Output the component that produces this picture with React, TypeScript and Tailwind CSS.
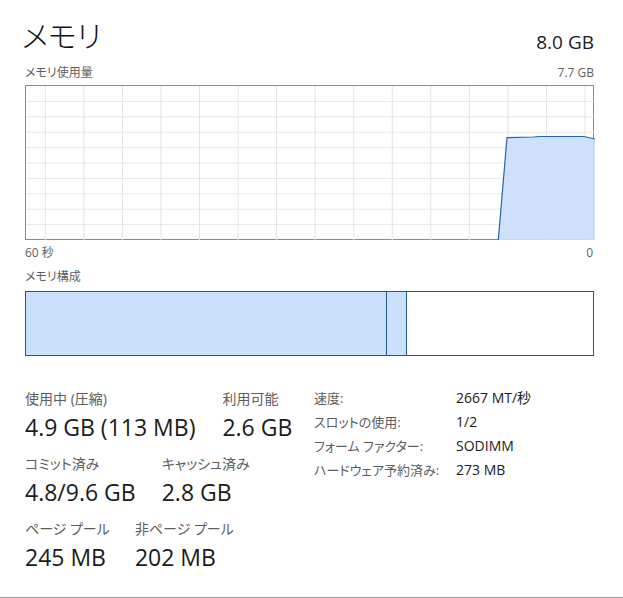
import React from 'react';

const FONT = "font-['Open_Sans','Noto_Sans_CJK_JP',sans-serif] [font-feature-settings:'palt']";

const GRAPH_W = 569;
const GRAPH_H = 154;

const vLines = Array.from({ length: 15 }, (_, i) => 19.3 + i * 38.55);
const hLines = Array.from({ length: 9 }, (_, i) => (i + 1) * 15.4);

const fillPoints = '472.3,154 481,51.7 507,51 515,50.5 558,50.5 569,53 569,154';

const UsageGraph: React.FC = () => (
  <div className="border border-[#8b8b8b] h-[155px] bg-white">
    <svg width={GRAPH_W} height={GRAPH_H} className="block">
      {hLines.map((y) => (
        <line key={'h' + y} x1={0} x2={GRAPH_W} y1={y} y2={y} stroke="#e8e8e8" strokeWidth={1} />
      ))}
      {vLines.map((x) => (
        <line key={'v' + x} x1={x} x2={x} y1={0} y2={GRAPH_H} stroke="#e4e4e4" strokeWidth={1} />
      ))}
      <polygon points={fillPoints} fill="#c9dffa" fillOpacity={0.92} stroke="none" />
      <polyline
        points="472.3,154 481,51.7 507,51 515,50.5 558,50.5 569,53"
        fill="none"
        stroke="#2a62a6"
        strokeWidth={1.2}
      />
    </svg>
  </div>
);

interface StatProps {
  label: string;
  value: string;
}

const Stat: React.FC<StatProps> = ({ label, value }) => (
  <div className="flex flex-col">
    <span className="text-[14px] leading-[20px] text-[#5d5d5d]">{label}</span>
    <span className="text-[23px] leading-[36px] text-[#1b1b1b]">{value}</span>
  </div>
);

const details = [
  ['速度:', '2667 MT/秒'],
  ['スロットの使用:', '1/2'],
  ['フォーム ファクター:', 'SODIMM'],
  ['ハードウェア予約済み:', '273 MB'],
];

export default function App() {
  return (
    <div className={`w-[623px] h-[598px] bg-white border-b border-[#a0a0a0] pl-[25px] pr-[29px] ${FONT}`}>
      <div className="flex justify-between items-end pt-[16px]">
        <h1 className="text-[30px] leading-[40px] font-light text-[#111] -ml-[3px]">メモリ</h1>
        <span className="text-[19px] leading-[26px] text-[#1b1b1b] mb-[1px]">8.0 GB</span>
      </div>

      <div className="flex justify-between mt-[9px] text-[12px] leading-[16px] text-[#5f5f5f]">
        <span>メモリ使用量</span>
        <span>7.7 GB</span>
      </div>

      <div className="mt-[4px]">
        <UsageGraph />
      </div>

      <div className="flex justify-between mt-[5px] text-[12px] leading-[16px] text-[#5f5f5f]">
        <span>60 秒</span>
        <span className="mr-[1px]">0</span>
      </div>

      <div className="mt-[8px] text-[12px] leading-[16px] text-[#5f5f5f]">メモリ構成</div>

      <div className="mt-[6px] flex h-[65px] border border-[#1d5898]">
        <div className="w-[361px] bg-[#cbe0fb] border-r border-[#1d5898]" />
        <div className="w-[20px] bg-[#cbe0fb] border-r border-[#1d5898]" />
        <div className="flex-1 bg-white" />
      </div>

      <div className="mt-[33px] flex items-start">
        <div className="w-[289px] flex flex-col gap-[9px]">
          <div className="flex gap-[27px]">
            <Stat label="使用中 (圧縮)" value="4.9 GB (113 MB)" />
            <Stat label="利用可能" value="2.6 GB" />
          </div>
          <div className="flex gap-[26px]">
            <Stat label="コミット済み" value="4.8/9.6 GB" />
            <Stat label="キャッシュ済み" value="2.8 GB" />
          </div>
          <div className="flex gap-[25px]">
            <Stat label="ページ プール" value="245 MB" />
            <Stat label="非ページ プール" value="202 MB" />
          </div>
        </div>

        <div className="grid grid-cols-[142px_1fr] -mt-[3px] leading-[24px]">
          {details.map(([k, v]) => (
            <React.Fragment key={k}>
              <span className="text-[13px] text-[#5d5d5d]">{k}</span>
              <span className="text-[14px] text-[#1b1b1b]">{v}</span>
            </React.Fragment>
          ))}
        </div>
      </div>
    </div>
  );
}
